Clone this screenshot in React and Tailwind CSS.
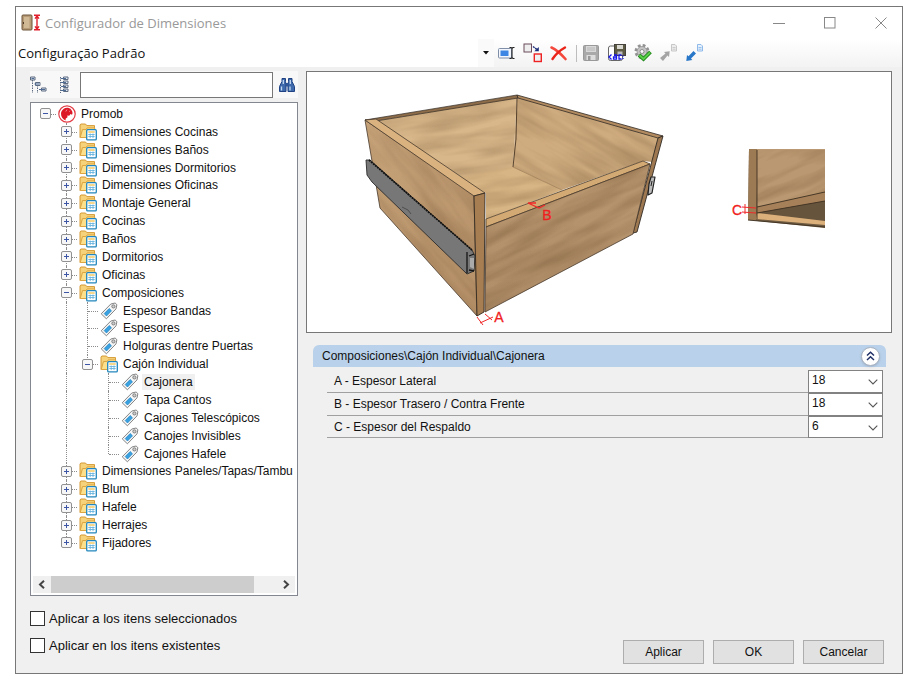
import React from "react";

const tree = [
  { d: 0, t: "Promob", k: "root", g: ["minus-root"] },
  { d: 1, t: "Dimensiones Cocinas", k: "folder", g: ["", "plus"] },
  { d: 1, t: "Dimensiones Baños", k: "folder", g: ["", "plus"] },
  { d: 1, t: "Dimensiones Dormitorios", k: "folder", g: ["", "plus"] },
  { d: 1, t: "Dimensiones Oficinas", k: "folder", g: ["", "plus"] },
  { d: 1, t: "Montaje General", k: "folder", g: ["", "plus"] },
  { d: 1, t: "Cocinas", k: "folder", g: ["", "plus"] },
  { d: 1, t: "Baños", k: "folder", g: ["", "plus"] },
  { d: 1, t: "Dormitorios", k: "folder", g: ["", "plus"] },
  { d: 1, t: "Oficinas", k: "folder", g: ["", "plus"] },
  { d: 1, t: "Composiciones", k: "folder", g: ["", "minus"] },
  { d: 2, t: "Espesor Bandas", k: "tag", g: ["", "line", "tee"] },
  { d: 2, t: "Espesores", k: "tag", g: ["", "line", "tee"] },
  { d: 2, t: "Holguras dentre Puertas", k: "tag", g: ["", "line", "tee"] },
  { d: 2, t: "Cajón Individual", k: "folder", g: ["", "line", "minus-last"] },
  { d: 3, t: "Cajonera", k: "tag", g: ["", "line", "", "tee"], selected: true },
  { d: 3, t: "Tapa Cantos", k: "tag", g: ["", "line", "", "tee"] },
  { d: 3, t: "Cajones Telescópicos", k: "tag", g: ["", "line", "", "tee"] },
  { d: 3, t: "Canojes Invisibles", k: "tag", g: ["", "line", "", "tee"] },
  { d: 3, t: "Cajones Hafele", k: "tag", g: ["", "line", "", "ell"] },
  { d: 1, t: "Dimensiones Paneles/Tapas/Tambu", k: "folder", g: ["", "plus"] },
  { d: 1, t: "Blum", k: "folder", g: ["", "plus"] },
  { d: 1, t: "Hafele", k: "folder", g: ["", "plus"] },
  { d: 1, t: "Herrajes", k: "folder", g: ["", "plus"] },
  { d: 1, t: "Fijadores", k: "folder", g: ["", "plus-last"] },
];

function Guide({ type }) {
  const [base, mod] = type.split("-");
  const full = base === "line" || base === "tee" || ((base === "plus" || base === "minus") && !mod);
  const half = base === "ell" || mod === "last";
  const box = base === "plus" || base === "minus";
  return (
    <span className="relative w-[21px] shrink-0 self-stretch">
      {full && <span className="absolute inset-y-0 left-[10px] border-l border-dotted border-[#8c8c8c]" />}
      {half && <span className="absolute top-0 bottom-1/2 left-[10px] border-l border-dotted border-[#8c8c8c]" />}
      {type !== "" && base !== "line" && (
        <span className="absolute top-1/2 right-0 left-[11px] border-t border-dotted border-[#8c8c8c]" />
      )}
      {box && (
        <button
          type="button"
          aria-label={base === "plus" ? "Expandir" : "Contraer"}
          className="absolute inset-y-0 left-[5px] my-auto flex h-[11px] w-[11px] items-center justify-center rounded-[2px] border border-[#919191] bg-[#f7f7f7]"
        >
          <svg viewBox="0 0 9 9" className="h-[9px] w-[9px] shrink-0" shapeRendering="crispEdges">
            <path d={base === "plus" ? "M2 4.5H7M4.5 2V7" : "M2 4.5H7"} stroke="#3c55a5" fill="none" />
          </svg>
        </button>
      )}
    </span>
  );
}

function FolderIcon() {
  return (
    <svg viewBox="0 0 18 18" className="-my-px h-[18px] w-[18px]">
      <path d="M1 14.5V1.8L2 1h4.500l1.300 1.600H15.500V7" fill="#f6d27b" stroke="#d49a35" />
      <path d="M1.200 14.500 3.500 6.500H7l1.200-1.600h7.600L14 14.500z" fill="#fde08b" stroke="#dda542" />
      <rect x="7.700" y="6.700" width="9.600" height="10.200" rx="1" fill="#fff" stroke="#2387bd" strokeWidth="1.300" />
      <path d="M9.300 9h6.400" stroke="#f3c24b" strokeWidth="1.300" />
      <path d="M9.300 11.500h6.400M9.300 13.500h6.400M11.200 10.500v4.600M14 10.500v4.600" stroke="#69b4df" strokeWidth=".9" />
    </svg>
  );
}

function TagIcon() {
  return (
    <svg viewBox="0 0 18 18" className="-my-px h-[18px] w-[18px]">
      <path d="M1.200 11.800 10.800 2l4.300-1 1.800 1.700-.9 4.200-9.600 9.900z" fill="#f5f5f5" stroke="#858585" strokeLinejoin="round" />
      <path d="m4.200 11.600 5-5.100 2.300 2.300-5 5.200z" fill="#39a1e0" stroke="#1b7fc0" strokeWidth=".7" />
      <circle cx="13.400" cy="4.400" r="1.600" fill="#ccc" stroke="#777" strokeWidth=".9" />
    </svg>
  );
}

function RootIcon() {
  return (
    <svg viewBox="0 0 18 18" className="-my-px h-[18px] w-[18px]">
      <circle cx="9" cy="9" r="8.200" fill="#fff" stroke="#e23b45" strokeWidth="1.200" />
      <path d="M5.500 4C7.500 2.400 11 2.400 13 4.400c1.800 1.800 1.800 4 1 5.300L12.600 9l-1.400 1.800-1.900-.3.200 1.700-1.700 1.200-.4 2C4.800 14.300 3 12 3 8.800 3 6.700 4.200 5 5.500 4z" fill="#dc1826" />
      <path d="M9 4.500 7.800 6.500M11.200 6.500l1-.5" stroke="#fff" strokeWidth=".5" />
    </svg>
  );
}

function TreeRow({ node }) {
  return (
    <li className="flex min-h-4 flex-1 items-center whitespace-nowrap">
      {node.g.map((g, i) => (
        <Guide key={i} type={g} />
      ))}
      <span className="flex w-[23px] shrink-0 pl-[2px]">
        {node.k === "root" ? <RootIcon /> : node.k === "folder" ? <FolderIcon /> : <TagIcon />}
      </span>
      <span className={node.selected ? "bg-[#f0f0f0] px-0.5 leading-4" : "px-0.5 leading-4"}>{node.t}</span>
    </li>
  );
}

function ToolButton({ label, children }) {
  return (
    <button type="button" aria-label={label} className="flex h-5 w-[26px] shrink-0 items-center justify-center">
      <svg viewBox="0 0 20 20" className="h-5 w-5">
        {children}
      </svg>
    </button>
  );
}

function Drawer() {
  return (
    <svg viewBox="307 72 584 260" className="block w-full" role="img" aria-label="Cajonera con cotas A, B y C">
      <defs>
        <filter id="grain" x="0" y="0" width="1" height="1" colorInterpolationFilters="sRGB">
          <feTurbulence type="fractalNoise" baseFrequency="0.012 0.08" numOctaves="3" seed="8" />
          <feColorMatrix values="0 0 0 0 .42  0 0 0 0 .3  0 0 0 0 .18  1.8 0 0 0 -.6" />
        </filter>
        <clipPath id="c-left"><path d="M365 120 474 195 477 316 380 208z" /></clipPath>
        <clipPath id="c-inner"><path d="M376 121 517 97 513 167 562 190 486 219V193z" /></clipPath>
        <clipPath id="c-right"><path d="M517 97 659 138 653 162 643 161 562 190 513 167z" /></clipPath>
        <clipPath id="c-front"><path d="M486 226 650 164 633 234 485 312z" /></clipPath>
        <clipPath id="c-detail"><path d="M757 150H825V192L757 207z" /></clipPath>
        <linearGradient id="g-left" x1="0" y1="0" x2="1" y2="1">
          <stop offset="0" stopColor="#c8a47a" />
          <stop offset="1" stopColor="#b59068" />
        </linearGradient>
        <linearGradient id="g-front" x1="0" y1="0" x2="0" y2="1">
          <stop offset="0" stopColor="#b8966f" />
          <stop offset="1" stopColor="#b08e69" />
        </linearGradient>
      </defs>
      <g strokeLinejoin="round">
        <path d="M376 121 517 97 513 167 562 190 486 219V193z" fill="#d8b78a" />
        <path d="M517 97 659 138 653 162 643 161 562 190 513 167z" fill="#cfac7f" />
        <path d="M513 167 562 190 486 219V193L455 178z" fill="#d8b584" />
        <g clipPath="url(#c-inner)">
          <rect x="340" y="40" width="260" height="240" filter="url(#grain)" opacity=".3" transform="rotate(-8 450 150)" />
        </g>
        <g clipPath="url(#c-right)">
          <rect x="460" y="40" width="260" height="240" filter="url(#grain)" opacity=".32" transform="rotate(30 590 140)" />
        </g>
        <path d="M517 97 516 139 513 167" fill="none" stroke="#4b3826" strokeWidth=".9" />
        <path d="M513 167 562 190" fill="none" stroke="#9b7852" strokeWidth=".7" />
        <path d="M365 120 517 95 518 98 376 121z" fill="#8c6c49" stroke="#302a24" strokeWidth=".7" />
        <path d="M517 95 663 136 658 138 518 98z" fill="#b38b60" stroke="#302a24" strokeWidth=".8" />
        <path d="M658 138 663 136 637 232 633 233z" fill="#9e7851" stroke="#302a24" strokeWidth=".9" />
        <path d="M365 120 474 195 477 316 380 208z" fill="url(#g-left)" stroke="#46392c" strokeWidth=".8" />
        <g clipPath="url(#c-left)">
          <rect x="320" y="90" width="230" height="250" filter="url(#grain)" opacity=".25" transform="rotate(50 425 215)" />
        </g>
        <path d="M365 120 376 119 485 193 474 196z" fill="#d9b27f" stroke="#46392c" strokeWidth=".8" />
        <path d="M474 196 485 193 484 312 477 316z" fill="#a77e52" stroke="#332a21" strokeWidth=".9" />
        <path d="M486 219 643 161 650 164 486 227z" fill="#d4aa74" stroke="#4d3c2a" strokeWidth=".8" />
        <path d="M486 227 650 164 633 234 485 312z" fill="url(#g-front)" stroke="#46392c" strokeWidth=".8" />
        <g clipPath="url(#c-front)">
          <rect x="440" y="130" width="260" height="220" filter="url(#grain)" opacity=".38" transform="rotate(-26 565 240)" />
        </g>
        <path d="M366 160 370 160 472 250 475 256 474 271 467 274 372 182 367 175z" fill="#777" stroke="#2a2a2a" strokeWidth=".9" />
        <path d="M369 160 472 250" stroke="#111" strokeWidth="1.700" strokeDasharray="2 .7" />
        <path d="M467 252v21M469 256l5-2M469 270l5 1" stroke="#151515" strokeWidth="1.300" />
        <path d="M470 258v9l4 2v-11z" fill="#aaa" />
        <path d="M402 207l6 3 3 4" fill="none" stroke="#444" strokeWidth=".8" />
        <path d="M651 177 655 177 652 193 648 195 649 184z" fill="#bbb" stroke="#222" strokeWidth="1.200" />
        <path d="M652 181l-1 5" stroke="#222" />
        <path d="M749 149H825V228L748 220z" fill="#6f5b42" />
        <path d="M749 149H758L756 220H748z" fill="#9c7a53" />
        <path d="M757 149H825V192L757 207z" fill="#ba9871" />
        <g clipPath="url(#c-detail)">
          <rect x="720" y="110" width="150" height="150" filter="url(#grain)" opacity=".42" transform="rotate(-24 790 180)" />
        </g>
        <path d="M757 207 825 192V201L757 213z" fill="#a68059" />
        <path d="M757 213 825 201V221z" fill="#67543d" />
        <path d="M757 213 825 221V225L756 219z" fill="#dcb07a" />
        <path d="M757 150V219M757 207 825 192M757 213 825 201M748 220 825 227" fill="none" stroke="#3f3222" strokeWidth=".9" />
      </g>
      <g fill="none" stroke="#f02828" strokeWidth="1">
        <path d="M477 317 483 325M480 323 493 317M485 314 492 320" />
        <path d="M536 203 528 203 539 208 545 205" strokeWidth="1.300" />
        <path d="M745 204V214M742 207 756 208M742 212 756 213" />
      </g>
      <g fill="#f02020" stroke="#f02020" strokeWidth=".3" fontFamily="Liberation Sans, sans-serif" fontSize="14" textAnchor="middle">
        <text x="499" y="322">A</text>
        <text x="547" y="220">B</text>
        <text x="737" y="215">C</text>
      </g>
    </svg>
  );
}

const fields = [
  { id: "a", label: "A - Espesor Lateral", value: "18" },
  { id: "b", label: "B - Espesor Trasero / Contra Frente", value: "18" },
  { id: "c", label: "C - Espesor del Respaldo", value: "6" },
];

function Field({ f }) {
  return (
    <div className="flex h-[23px] items-stretch border-b border-[#a0a0a0] last:h-[22px]">
      <label htmlFor={f.id} className="flex flex-1 items-center pl-[7px]">{f.label}</label>
      <div className="relative -mb-px w-[75px] border border-[#828282] bg-white">
        <select id={f.id} defaultValue={f.value} className="block h-[18px] w-full appearance-none bg-transparent pl-[3px] outline-none">
          <option>{f.value}</option>
        </select>
        <svg viewBox="0 0 10 6" className="pointer-events-none absolute top-2 right-1 h-[6px] w-[10px]">
          <path d="M.7.7 5 5 9.3.7" fill="none" stroke="#555" strokeWidth="1.1" />
        </svg>
      </div>
    </div>
  );
}

function Check({ id, label }) {
  return (
    <div className="flex h-[15px] items-center gap-1">
      <input id={id} type="checkbox" className="h-[15px] w-[15px] shrink-0 appearance-none border border-[#333] bg-white" />
      <label htmlFor={id}>{label}</label>
    </div>
  );
}

export default function App() {
  return (
    <div className="flex min-h-screen flex-col bg-white pt-1.5 pr-[11px] pb-2.5 pl-[15px] font-['Liberation_Sans',Arial,sans-serif] text-[12px] leading-4 text-[#111]">
      <div className="flex flex-1 flex-col border border-[#777] bg-[#f0f0f0]">
        <header className="flex h-8 items-center bg-white pr-[15px] pl-[5px] font-['Open_Sans','Noto_Sans',sans-serif] text-[13px]">
          <svg viewBox="0 0 20 18" className="h-[18px] w-5">
            <rect x="1" y="1" width="10" height="15" rx="1" fill="#b79b76" stroke="#6d5439" />
            <rect x="3" y="3" width="5.500" height="11" fill="#d1b995" />
            <path d="M2.500 8v2" stroke="#4d3925" />
            <path d="M13 1.200h6M13 15.800h6M16 2v13M14 4.600 16 2l2 2.600M14 12.400l2 2.600 2-2.600" fill="none" stroke="#e0202c" strokeWidth="1.400" />
          </svg>
          <h1 className="ml-1 flex-1 text-[#999]">Configurador de Dimensiones</h1>
          <div className="flex items-center gap-[39px] text-[#888]">
            <button type="button" aria-label="Minimizar"><svg viewBox="0 0 12 12" className="h-3 w-3"><path d="M0 6.500h12" stroke="currentColor" /></svg></button>
            <button type="button" aria-label="Maximizar"><svg viewBox="0 0 12 12" className="h-3 w-3"><rect x=".5" y=".5" width="10.500" height="10.500" fill="none" stroke="currentColor" /></svg></button>
            <button type="button" aria-label="Cerrar"><svg viewBox="0 0 12 12" className="h-3 w-3"><path d="m.5.5 11 11m0-11-11 11" fill="none" stroke="currentColor" /></svg></button>
          </div>
        </header>

        <div className="flex h-7 items-center bg-linear-to-b from-white to-[#f3f3f3] font-['Open_Sans','Noto_Sans',sans-serif] text-[13px]">
          <div className="relative flex h-full w-[478px] items-center bg-white">
            <select aria-label="Configuración" className="h-full w-full appearance-none bg-transparent pl-[2px] outline-none">
              <option>Configuração Padrão</option>
            </select>
            <span className="pointer-events-none absolute inset-y-0 right-0 flex w-4 items-center justify-center bg-[#fafafa]">
              <svg viewBox="0 0 6 4" className="h-1 w-1.5"><path d="M0 0h6L3 3.500z" fill="#111" /></svg>
            </span>
          </div>
          <ToolButton label="Renombrar">
            <rect x="1.500" y="5.500" width="13" height="9.500" rx="1" fill="#f3f7fd" stroke="#7f8fa8" />
            <rect x="3.500" y="7.500" width="8" height="5.500" fill="#3d86e4" />
            <path d="M12.500 4.500h1.500l1 1 1-1h1.500M15 5.500v9M12.500 15.500h1.500l1-1 1 1h1.500" fill="none" stroke="#222" strokeWidth="1.100" />
          </ToolButton>
          <ToolButton label="Duplicar">
            <rect x="1" y="1" width="7.500" height="8" fill="#eee" stroke="#6b4c5c" />
            <rect x="11.300" y="11" width="7" height="7.500" fill="#f1eef0" stroke="#e22" strokeWidth="1.400" />
            <path d="m10 3.500 4.500 3.500" fill="none" stroke="#1b2d78" strokeWidth="1.400" strokeDasharray="2 .7" /><path d="M15.800 4v4.200h-4.500z" fill="#1b2d78" />
          </ToolButton>
          <ToolButton label="Eliminar">
            <path d="M2.500 4.500C6 6 11.500 10.500 16.500 16" fill="none" stroke="#f5483c" strokeWidth="2.600" strokeLinecap="round" />
            <path d="M16 4.500C11.500 7 6.500 11.500 3.500 16" fill="none" stroke="#ea2419" strokeWidth="2.400" strokeLinecap="round" />
          </ToolButton>
          <span className="mr-px ml-1 h-[17px] w-px bg-[#bdbdbd]" />
          <ToolButton label="Guardar">
            <rect x="2.500" y="2.500" width="15" height="15" rx="1" fill="#a9a9a9" stroke="#999" />
            <path d="M5 3h10v6H5z" fill="#d9d9d9" /><path d="M6 5h8M6 7h8" stroke="#b5b5b5" />
            <path d="M5.500 12h9v5h-9z" fill="#ddd" /><path d="M7 13h2.500v4H7z" fill="#999" />
          </ToolButton>
          <ToolButton label="Guardar como">
            <rect x="1.500" y="3" width="14" height="14.500" rx="2" fill="#fff" stroke="#666" />
            <rect x="7.500" y="1.500" width="11" height="11" fill="#5e5b45" stroke="#44423a" />
            <path d="M10 2h6v4h-6z" fill="#d8d8d0" /><path d="M10.500 8.500h5v3.500h-5z" fill="#bbb" />
            <path d="M4.500 11.500 2 14l2.500 2.500M7 12h2.500v4.200H6.500V14h3M14.500 12h-2.500v4h2.500M16 12.500v1M16 15v1" fill="none" stroke="#1717e8" strokeWidth="1.300" />
          </ToolButton>
          <ToolButton label="Aplicar configuración">
            <circle cx="9" cy="8.500" r="6" fill="none" stroke="#929292" strokeWidth="3" strokeDasharray="2.700 2" />
            <circle cx="9" cy="8.500" r="5" fill="#c4c4c4" stroke="#929292" strokeWidth=".8" />
            <circle cx="9" cy="8.500" r="2" fill="#fff" stroke="#8d8d8d" />
            <path d="m6 12 4.500 4 7-7" fill="none" stroke="#22891c" strokeWidth="3.800" /><path d="m6.500 12.300 4 3.600 6.500-6.500" fill="none" stroke="#5bd04b" strokeWidth="2" />
          </ToolButton>
          <ToolButton label="Importar">
            <path d="m1 15 3 3L8.500 12.500l1.500 1.500.7-5.700L5 9l1.500 1.500z" fill="#a5a5a5" />
            <path d="M12.500 1.500h3.500L17.500 3v5h-5z" fill="#eee" stroke="#bbb" strokeWidth=".8" /><path d="M13.500 4.500h3M13.500 6.200h3" stroke="#bbb" strokeWidth=".7" />
          </ToolButton>
          <ToolButton label="Exportar">
            <path d="M1.300 18 2 12l1.500 1.300L8.500 8 11 10.500 6 15.500 7.300 17z" fill="#2877c9" />
            <path d="M12.500 1.500h3.500L17.500 3v5h-5z" fill="#e6f1fd" stroke="#76abe4" strokeWidth=".8" /><path d="M13.500 4.500h3M13.500 6.200h3" stroke="#76abe4" strokeWidth=".7" />
          </ToolButton>
        </div>

        <main className="flex flex-1 gap-2 pt-1 pr-[10px] pl-[14px]">
          <section className="flex w-[268px] shrink-0 flex-col">
            <div className="flex h-[27px] items-center bg-[#f8f8f8]">
              <button type="button" aria-label="Expandir todo" className="w-[26px]">
                <svg viewBox="0 0 18 18" className="h-[18px] w-[18px]" fill="none" stroke="#5d6b80">
                  <path d="M2.500 4v13M7.500 9v8" strokeDasharray="1.500 1" />
                  <path d="M.5 1h4.500v3H.5zM5.500 6.500H10v3H5.500zM11.500 12H16v3h-4.500z" fill="#dfe8f3" />
                  <path d="M1.500 2.500h2.500M4.500 8H9M9 13.500h6" stroke="#4f6b94" />
                </svg>
              </button>
              <button type="button" aria-label="Contraer todo" className="w-6">
                <svg viewBox="0 0 18 18" className="h-[18px] w-[18px]" fill="none" stroke="#5d6b80">
                  <path d="M4.500 1v16" strokeDasharray="1.500 1" />
                  <path d="M7.500 1H12v2.500H7.500zM7.500 5H12v2.500H7.500zM7.500 9H12v2.500H7.500zM7.500 13H12v2.500H7.500z" fill="#dfe8f3" />
                  <path d="M5 2.500h5M5 6.500h5M5 10.500h5M5 14.500h5" stroke="#4f6b94" />
                </svg>
              </button>
              <input type="text" aria-label="Buscar" className="h-[26px] min-w-0 flex-1 border border-[#777] bg-white px-1 outline-none" />
              <button type="button" aria-label="Buscar dimensión" className="flex w-[25px] justify-end pr-0.5">
                <svg viewBox="0 0 18 16" className="h-4 w-[18px]">
                  <path d="M4 1.500h3.500v3L8 8v6.500H1.500v-5L4 4.500zM14 1.500h-3.500v3L10 8v6.500h6.500v-5L14 4.500z" fill="#3f6bac" stroke="#1f4284" strokeLinejoin="round" />
                  <path d="M7.500 6h3v3.500h-3z" fill="#2e5799" /><path d="M3.500 9.500v4M5.300 3v4M12 9.500v4M12.300 3v4" stroke="#c3d9f2" strokeWidth="1.300" />
                </svg>
              </button>
            </div>
            <div className="mt-1 flex flex-1 flex-col border border-[#828790] bg-white px-[2px] pt-0.5 pb-[2px]">
              <ul className="flex flex-1 flex-col overflow-hidden pl-[2px]">
                {tree.map((n) => <TreeRow key={n.t} node={n} />)}
              </ul>
              <div className="mt-6 flex h-[17px] items-center bg-[#f0f0f0]">
                <button type="button" aria-label="Desplazar a la izquierda" className="flex w-[18px] justify-center">
                  <svg viewBox="0 0 8 9" className="h-[9px] w-2"><path d="m6 .8-4 3.700 4 3.700" fill="none" stroke="#444" strokeWidth="2" /></svg>
                </button>
                <div className="h-full flex-1"><div className="h-full w-[90%] bg-[#cdcdcd]" /></div>
                <button type="button" aria-label="Desplazar a la derecha" className="flex w-[18px] justify-center">
                  <svg viewBox="0 0 8 9" className="h-[9px] w-2"><path d="m2 .8 4 3.700-4 3.700" fill="none" stroke="#444" strokeWidth="2" /></svg>
                </button>
              </div>
            </div>
            <div className="flex flex-col gap-3 pt-[15px] pb-5 text-[13px]">
              <Check id="sel" label="Aplicar a los itens seleccionados" />
              <Check id="exi" label="Aplicar en los itens existentes" />
            </div>
          </section>

          <section className="flex min-w-0 flex-1 flex-col">
            <div className="border border-[#777] bg-white"><Drawer /></div>
            <div className="mt-3 mr-[6px] ml-[7px]">
              <div className="flex h-[22px] items-center justify-between rounded-t-md bg-[#b9d1ea] pr-1.5 pl-[9px]">
                <h2>Composiciones\Cajón Individual\Cajonera</h2>
                <button type="button" aria-label="Contraer grupo" className="flex h-[19px] w-[19px] items-center justify-center rounded-full border border-[#a9b3c2] bg-white shadow">
                  <svg viewBox="0 0 9 10" className="h-[10px] w-[9px]"><path d="m1 4.500 3.500-3.300L8 4.500M1 9l3.500-3.300L8 9" fill="none" stroke="#1f2f66" strokeWidth="1.500" /></svg>
                </button>
              </div>
              <div className="mt-[3px] mr-[3px] ml-[14px]">
                {fields.map((f) => <Field key={f.id} f={f} />)}
              </div>
            </div>
            <div className="mt-auto mr-2 mb-[9px] flex justify-end gap-[9px]">
              {["Aplicar", "OK", "Cancelar"].map((b) => (
                <button key={b} type="button" className="h-6 w-[81px] border border-[#adadad] bg-[#e1e1e1]">{b}</button>
              ))}
            </div>
          </section>
        </main>
      </div>
    </div>
  );
}
